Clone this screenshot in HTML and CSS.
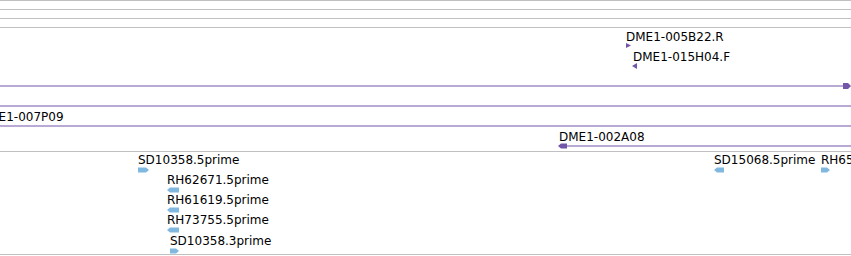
FILE: index.html
```html
<!DOCTYPE html>
<html lang="en">
<head>
  <meta charset="UTF-8" />
  <title>Tracks</title>
  <link rel="stylesheet" href="styles.css">
</head>
<body>
  <div class="panel">
    <!-- empty tracks -->
    <div class="track empty"></div>
    <div class="track empty"></div>
    <div class="track empty"></div>

    <!-- BAC ends track -->
    <div class="track bac">
      <div class="feat" style="left:626px;top:3px">
        <span class="label">DME1-005B22.R</span>
        <svg class="glyph" width="6" height="5"><polygon points="0,0 5,2.5 0,5" /></svg>
      </div>
      <div class="feat" style="left:632px;top:23px">
        <span class="label pad">DME1-015H04.F</span>
        <svg class="glyph" width="6" height="6"><polygon points="0,3 5,0 5,6" /></svg>
      </div>
      <div class="feat" style="left:0;top:55px">
        <svg class="glyph" width="851" height="6">
          <rect x="0" y="2.5" width="844" height="1" />
          <polygon points="843,0 848,0 851,3 848,6 843,6" />
        </svg>
      </div>
      <div class="feat" style="left:0;top:75px">
        <svg class="glyph" width="851" height="6"><rect x="0" y="2.5" width="851" height="1" /></svg>
      </div>
      <div class="feat" style="left:-21px;top:83px">
        <span class="label">DME1-007P09</span>
        <svg class="glyph" width="872" height="6"><rect x="0" y="2.5" width="872" height="1" /></svg>
      </div>
      <div class="feat" style="left:558px;top:103px">
        <span class="label pad">DME1-002A08</span>
        <svg class="glyph" width="293" height="6">
          <rect x="6" y="2.5" width="287" height="1" />
          <polygon points="0,3 3,0.5 9,0.5 9,5.5 3,5.5" />
        </svg>
      </div>
    </div>

    <!-- EST track -->
    <div class="track est">
      <div class="feat" style="left:138px;top:2px">
        <span class="label">SD10358.5prime</span>
        <svg class="glyph" width="12" height="6"><polygon points="0,0.5 8,0.5 11,3 8,5.5 0,5.5" /></svg>
      </div>
      <div class="feat" style="left:167px;top:22px">
        <span class="label">RH62671.5prime</span>
        <svg class="glyph" width="13" height="6"><polygon points="0,3 3,0.5 12,0.5 12,5.5 3,5.5" /></svg>
      </div>
      <div class="feat" style="left:167px;top:42px">
        <span class="label">RH61619.5prime</span>
        <svg class="glyph" width="13" height="6"><polygon points="0,3 3,0.5 12,0.5 12,5.5 3,5.5" /></svg>
      </div>
      <div class="feat" style="left:167px;top:62px">
        <span class="label">RH73755.5prime</span>
        <svg class="glyph" width="13" height="6"><polygon points="0,3 3,0.5 12,0.5 12,5.5 3,5.5" /></svg>
      </div>
      <div class="feat" style="left:170px;top:83px">
        <span class="label">SD10358.3prime</span>
        <svg class="glyph" width="10" height="6"><polygon points="0,0.5 6,0.5 9,3 6,5.5 0,5.5" /></svg>
      </div>
      <div class="feat" style="left:714px;top:2px">
        <span class="label">SD15068.5prime</span>
        <svg class="glyph" width="11" height="6"><polygon points="0,3 3,0.5 10,0.5 10,5.5 3,5.5" /></svg>
      </div>
      <div class="feat" style="left:821px;top:2px">
        <span class="label">RH65417.5prime</span>
        <svg class="glyph" width="10" height="6"><polygon points="0,0.5 6,0.5 9,3 6,5.5 0,5.5" /></svg>
      </div>
    </div>
  </div>
</body>
</html>
```

FILE: styles.css
```css
/* Global */
* {
  margin: 0;
  padding: 0;
  box-sizing: content-box;
}
body {
  font-family: 'DejaVu Sans', sans-serif;
  font-size: 12px;
  color: #000;
  background: #fff;
  overflow: hidden;
}
.panel {
  width: 851px;
  height: 256px;
  overflow: hidden;
}

/* Tracks */
.track {
  position: relative;
  border-top: 1px solid #c0c0c0;
}
.track.empty {
  height: 8px;
}
.track.bac {
  height: 123px;
}
.track.est {
  height: 102px;
  border-bottom: 1px solid #c0c0c0;
}

/* Features */
.feat {
  position: absolute;
  white-space: nowrap;
}
.label {
  display: block;
  line-height: 12px;
  height: 12px;
}
.label.pad {
  padding-left: 1px;
}
.glyph {
  display: block;
}
.bac .glyph {
  fill: #7356aa;
}
.est .glyph {
  fill: #80b8e0;
  margin-top: 1px;
}
```
